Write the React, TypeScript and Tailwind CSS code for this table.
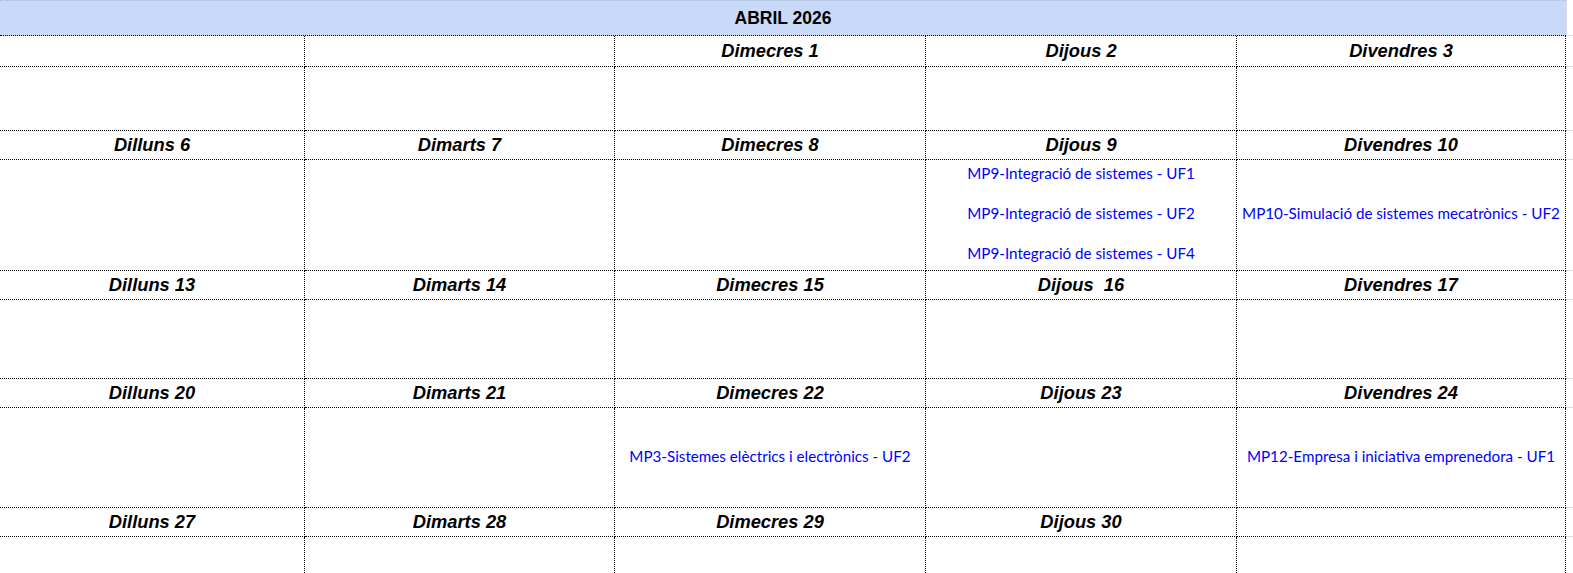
import React from "react";

type Day = {
  label: string;
  items?: string[];
};

type Week = {
  headerH: string;
  bodyH: string;
  days: (Day | null)[];
};

const weeks: Week[] = [
  {
    headerH: "h-[31px]",
    bodyH: "h-[64px]",
    days: [null, null, { label: "Dimecres 1" }, { label: "Dijous 2" }, { label: "Divendres 3" }],
  },
  {
    headerH: "h-[29px]",
    bodyH: "h-[111px]",
    days: [
      { label: "Dilluns 6" },
      { label: "Dimarts 7" },
      { label: "Dimecres 8" },
      {
        label: "Dijous 9",
        items: [
          "MP9-Integració de sistemes - UF1",
          "MP9-Integració de sistemes - UF2",
          "MP9-Integració de sistemes - UF4",
        ],
      },
      { label: "Divendres 10", items: ["MP10-Simulació de sistemes mecatrònics - UF2"] },
    ],
  },
  {
    headerH: "h-[29px]",
    bodyH: "h-[79px]",
    days: [
      { label: "Dilluns 13" },
      { label: "Dimarts 14" },
      { label: "Dimecres 15" },
      { label: "Dijous  16" },
      { label: "Divendres 17" },
    ],
  },
  {
    headerH: "h-[29px]",
    bodyH: "h-[100px]",
    days: [
      { label: "Dilluns 20" },
      { label: "Dimarts 21" },
      { label: "Dimecres 22", items: ["MP3-Sistemes elèctrics i electrònics - UF2"] },
      { label: "Dijous 23" },
      { label: "Divendres 24", items: ["MP12-Empresa i iniciativa emprenedora - UF1"] },
    ],
  },
  {
    headerH: "h-[29px]",
    bodyH: "h-[60px]",
    days: [
      { label: "Dilluns 27" },
      { label: "Dimarts 28" },
      { label: "Dimecres 29" },
      { label: "Dijous 30" },
      null,
    ],
  },
];

const cols = "grid grid-cols-[305px_310px_311px_311px_329px_7px]";
const cell = "border-r border-b border-dotted border-black";
const gap = "border-b border-[#dadce0]";

function Entries({ items }: { items: string[] }) {
  return (
    <div className="flex flex-col items-center gap-[20px] pb-[4px] text-[15.2px] leading-[20px] text-[#0000ff] font-['Lato',sans-serif] whitespace-nowrap">
      {items.map((t) => (
        <span key={t}>{t}</span>
      ))}
    </div>
  );
}

export default function App() {
  return (
    <div className="w-[1573px] h-[573px] overflow-hidden bg-white font-['Liberation_Sans',Arial,sans-serif]">
      {/* Month title */}
      <div className="flex">
        <div className="w-[1566px] h-[36px] bg-[#c9daf8] border-t border-t-[#a7b9d9] border-b border-b-black border-dotted flex items-center justify-center">
          <span className="text-[17.5px] font-bold text-black">ABRIL 2026</span>
        </div>
        <div className={`w-[7px] h-[36px] border-l border-[#dadce0] ${gap}`} />
      </div>

      {weeks.map((w, wi) => (
        <div key={wi}>
          {/* day names */}
          <div className={`${cols} ${w.headerH}`}>
            {w.days.map((d, i) => (
              <div
                key={i}
                className={`${cell} flex items-center justify-center text-[18.3px] font-bold italic text-black whitespace-pre`}
              >
                {d?.label}
              </div>
            ))}
            <div className={gap} />
          </div>
          {/* events */}
          <div className={`${cols} ${w.bodyH}`}>
            {w.days.map((d, i) => (
              <div key={i} className={`${cell} flex items-center justify-center`}>
                {d?.items && <Entries items={d.items} />}
              </div>
            ))}
            <div className={gap} />
          </div>
        </div>
      ))}
    </div>
  );
}
